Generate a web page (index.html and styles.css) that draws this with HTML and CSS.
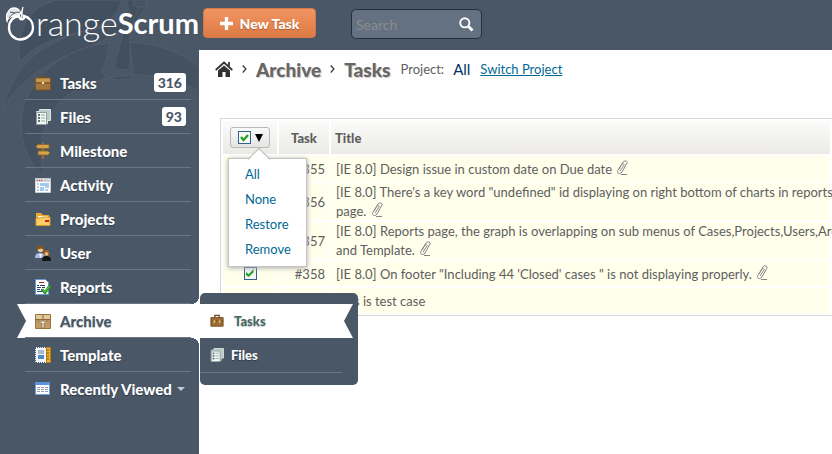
FILE: index.html
```
<!DOCTYPE html>
<html lang="en">
<head>
<meta charset="utf-8">
<title>OrangeScrum - Archive</title>
<link rel="stylesheet" href="styles.css">
</head>
<body>
<div class="app">
  <aside class="sidebar">
    <svg class="watermark" width="199" height="210" viewBox="0 0 199 210" aria-hidden="true">
      <path d="M20 62C14 26 36 0 62 0h60c-3 13-15 25-34 30C58 38 34 44 20 62z" fill="#3f4c5b" stroke="#56616f"/>
      <path d="M3 108C14 62 48 38 92 30c20-4 34-14 42-30h14c-4 16-16 28-30 32C86 55 40 52 3 108z" fill="#424f5e" stroke="#56616f"/>
      <path d="M110 43c-3 12-4 20-8 27 2 8 10 10 18 10 12 0 15-6 12-18l-3-20c27 1 49 9 70 24v26C165 68 96 68 61 101c-18 17-24 46-17 75-26-22-30-62-12-88 18-27 45-42 78-45z" fill="#424f5e" stroke="#56616f"/>
      <path d="M136 0c5 8 0 14-3 20-3 8-4 15-3 22v22c0 8-15 8-15 0 4-14 7-32 14-48 2-6-3-9-1-16z" fill="#3f4c5b" stroke="#56616f"/>
      <ellipse cx="140" cy="3" rx="7" ry="4" fill="#465363" stroke="#5a6573"/>
    </svg>
    <a class="logo" href="#" aria-label="OrangeScrum">
      <svg width="30" height="38" viewBox="0 0 30 38" aria-hidden="true">
        <path d="M13 12C6 13 3 18 3 23.500c0 7 5 12 11.500 12S27 30 27 23.500c0-5-3-10-9-11.500 1 4-4 5-5 0z" fill="none" stroke="#fff" stroke-width="2.400"/>
        <path d="M16 14c-1-5 0-8 1-11M15 9C11 2 5 3 2 8c-2 3-2 6-1 9 1-4 5-5 8-5 3-1 5-1 6-3z" fill="#dfe3e7" stroke="#fff" stroke-width="1.300"/>
        <path d="M3 14c3-4 6-6 11-6M4 8l5 1" fill="none" stroke="#4a5767"/>
      </svg>
      <span class="logo-light">range</span><span class="logo-bold">Scrum</span>
    </a>
    <nav>
      <ul class="nav">
        <li><a href="#"><svg class="icon" viewBox="0 0 16 16"><path d="M5.500 3V1.500h5V3" fill="none" stroke="#6d4a20"/><path d="M.5 3h15v12H.5z" fill="#a5763c" stroke="#7c5425"/><path d="M1 3.500h14V7H1z" fill="#c5974f"/><path d="M0 8h16" stroke="#6d4a20"/><path d="M7 7h2v2H7z" fill="#f3dfaa"/></svg>Tasks<span class="count">316</span></a></li>
        <li><a href="#"><svg class="icon" viewBox="0 0 16 16"><path d="M4.500.5h11v11h-3v3h-11v-12h3z" fill="#bccac8" stroke="#dce7e4"/><path d="M1.500 3.500h10v12h-10z" fill="#f2f8f6" stroke="#8fa19e"/><path d="M3 6h2M3 9h2M3 12h2" stroke="#5c7672" stroke-width="2"/><path d="M6 6h4M6 9h4M6 12h4" stroke="#91a5a1"/></svg>Files<span class="count">93</span></a></li>
        <li><a href="#"><svg class="icon" viewBox="0 0 16 16"><path d="M7 0h2v16H7z" fill="#9a6b2c"/><path d="M1 3l2-1.500h11v4H3L1 4zM3 8h10l2 2-2 2H3z" fill="#d4a44c" stroke="#8b6124" stroke-width=".8"/></svg>Milestone</a></li>
        <li><a href="#"><svg class="icon" viewBox="0 0 16 16"><path d="M.5 1.500h15v14H.5z" fill="#fff" stroke="#c9ced3"/><path d="M1 2h14v3H1z" fill="#cdd1d5"/><path d="M2 3h1v1H2zM4 3h1v1H4zM6 3h1v1H6z" fill="#d33c32"/><path d="M5 6h9v3H5zM5 10h4v4H5z" fill="#9ec9f1"/><path d="M2 7h2M2 10h2M2 13h2M10 10h4M10 13h3" stroke="#759abc"/></svg>Activity</a></li>
        <li><a href="#"><svg class="icon" viewBox="0 0 16 16"><path d="M1 14V2h5l2 2h6v4H2z" fill="#e9aa2d"/><path d="M3 5h10v5H3z" fill="#fff8dc"/><path d="M1 14.500V7h5l2-1h7v8.500z" fill="#f9cf63" stroke="#d79a29"/><path d="M10 9h4v2h-4z" fill="#d61f1f"/></svg>Projects</a></li>
        <li><a href="#"><svg class="icon" viewBox="0 0 16 16"><path d="M0 13c0-4 2-5 5-5s5 1 5 5z" fill="#a9b9e8"/><circle cx="5.500" cy="4.500" r="2.800" fill="#f2c28f"/><path d="M2.500 5C2 1 4 0 6 .5S9 2 8.500 5C7 3 5 3 2.500 5z" fill="#8a5312"/><path d="M4 9l1.500 4L7 9z" fill="#fff"/><path d="M7 16c0-4 1-5 4-5s5 1 5 5z" fill="#141414"/><circle cx="11.500" cy="8.500" r="2.300" fill="#f0bd86"/><path d="M9 12c-1-6 1-7 2.500-7S15 6 14 12c-1-1 0-3-1-4s-3-1-3 0z" fill="#a4631b"/></svg>User</a></li>
        <li><a href="#"><svg class="icon" viewBox="0 0 16 16"><path d="M.5.5h10l3 3v12H.5z" fill="#fff" stroke="#679bd0"/><path d="M4 3.500h5" stroke="#b32424"/><path d="M2 6.500h2m1 0h5M2 8.500h4m1 0h3M2 10.500h3m1 0h2M2 12.500h5" stroke="#28406f"/><path d="M7 10.500l3 3 5-7" fill="none" stroke="#279b27" stroke-width="3"/><path d="M8 10.500l2 2 4-5" fill="none" stroke="#75d45a"/></svg>Reports</a></li>
        <li class="active"><a href="#"><svg class="icon" viewBox="0 0 16 16"><path d="M.5 1.500h15v14H.5z" fill="#c39a62" stroke="#9c7440"/><path d="M1 2h14v4H1z" fill="#e3c898"/><path d="M8 1v5M0 6.500h16" stroke="#8f6a39"/><path d="M3 7c2 3 3 1 5 1s3 2 5-1c0 3-3 3-4 3v5H7v-5c-2 0-4 0-4-3z" fill="#f4f0e6" stroke="#7a5a32" stroke-width=".6"/></svg>Archive</a>
          <ul class="submenu">
            <li class="current"><a href="#"><svg class="icon-small" viewBox="0 0 16 16"><path d="M5.500 4V1.500h5V4" fill="none" stroke="#6d4a20" stroke-width="1.500"/><path d="M1 4h14v10H1z" fill="#9b6c35" stroke="#74501f"/><path d="M1 8h14" stroke="#6d4a20"/><path d="M4 7h2v3H4zM10 7h2v3h-2z" fill="#e6c175"/></svg>Tasks</a></li>
            <li><a href="#"><svg class="icon-small" viewBox="0 0 16 16"><path d="M4.500.5h11v11h-3v3h-11v-12h3z" fill="#bccac8" stroke="#dce7e4"/><path d="M1.500 3.500h10v12h-10z" fill="#f2f8f6" stroke="#8fa19e"/><path d="M3 6h2M3 9h2M3 12h2" stroke="#5c7672" stroke-width="2"/><path d="M6 6h4M6 9h4M6 12h4" stroke="#91a5a1"/></svg>Files</a></li>
          </ul>
        </li>
        <li><a href="#"><svg class="icon" viewBox="0 0 16 16"><path d="M1 1h11v14H1z" fill="#f4f7fb" stroke="#e9eef5" stroke-width="2" stroke-dasharray="1 1"/><path d="M3 4h6M3 6h6" stroke="#667ba0"/><path d="M3 8h6v4H3z" fill="#5588c7"/><path d="M11.500.5h4v15h-4z" fill="#eeb130" stroke="#b97a15"/><path d="M12 3h2M12 6h2M12 9h2M12 12h2" stroke="#8e5b0b"/></svg>Template</a></li>
        <li class="last"><a href="#"><svg class="icon" viewBox="0 0 16 16"><path d="M.5 1.500h14v12H.5z" fill="#fff" stroke="#6f9fdb"/><path d="M0 1h15v3H0z" fill="#5c93dc"/><path d="M2 6.500h3m1 0h3m1 0h3M2 8.500h3m1 0h3m1 0h3M2 10.500h3m1 0h3m1 0h3" stroke="#929cac"/></svg>Recently Viewed<svg class="caret" width="8" height="5" viewBox="0 0 8 5"><path d="M0 0h8L4 4z" fill="#c6cbd0"/></svg></a></li>
      </ul>
    </nav>
  </aside>

  <header class="topbar">
    <button class="new-task" type="button"><svg width="13" height="13" viewBox="0 0 13 13" aria-hidden="true"><path d="M6.500 0v13M0 6.500h13" stroke="#fff" stroke-width="3.400"/></svg>New Task</button>
    <form class="search">
      <input type="search" placeholder="Search" aria-label="Search">
      <button type="submit" aria-label="Submit search"><svg width="15" height="15" viewBox="0 0 15 15"><circle cx="5.800" cy="5.800" r="4.600" fill="none" stroke="#fff" stroke-width="1.900"/><path d="M9.500 9.500l4 4" stroke="#fff" stroke-width="2.800"/></svg></button>
    </form>
  </header>

  <main class="main">
    <div class="crumbs">
      <a href="#" aria-label="Home"><svg width="18" height="17" viewBox="0 0 18 17"><path d="M9 4.500l6 5V16h-4.500v-5h-3v5H3V9.500z" fill="#333"/><path d="M.7 9L9 1.500 17.300 9M14 1v4" fill="none" stroke="#333" stroke-width="1.800"/></svg></a>
      <svg class="sep" width="5" height="8" viewBox="0 0 5 8"><path d="M.7.5L4 4 .7 7.500" fill="none" stroke="#333" stroke-width="1.200"/></svg>
      <h1>Archive</h1>
      <svg class="sep" width="5" height="8" viewBox="0 0 5 8"><path d="M.7.5L4 4 .7 7.500" fill="none" stroke="#333" stroke-width="1.200"/></svg>
      <h1>Tasks</h1>
      <span class="label">Project:</span>
      <span class="project">All</span>
      <a class="switch" href="#">Switch Project</a>
    </div>

    <table class="tasks">
      <thead>
        <tr>
          <th class="col-check">
            <div class="bulk">
              <button class="bulk-button" type="button" aria-label="Select tasks"><span class="box"><svg width="9" height="8" viewBox="0 0 9 8"><path d="M1 3l2.500 3L8 1" fill="none" stroke="#21a121" stroke-width="2.200"/></svg></span><svg width="8" height="8" viewBox="0 0 8 8"><path d="M0 0h8L4 8z" fill="#000"/></svg></button>
              <div class="menu">
                <a href="#">All</a>
                <a href="#">None</a>
                <a href="#">Restore</a>
                <a href="#">Remove</a>
              </div>
            </div>
          </th>
          <th class="col-task">Task</th>
          <th class="col-title">Title</th>
        </tr>
      </thead>
      <tbody>
        <tr><td class="check"><input type="checkbox" checked aria-label="Task 355"></td><td class="id">#355</td><td>[IE 8.0] Design issue in custom date on Due date <svg class="clip" viewBox="0 0 12 16"><path d="M3 10l4-7c1-2 5-1 4 1l-5 9c-2 3-6 1-4-2l4-6c1-1 3 0 2 1l-4 6M5 15.500h6" /></svg></td></tr>
        <tr class="tall"><td class="check"><input type="checkbox" checked aria-label="Task 356"></td><td class="id">#356</td><td>[IE 8.0] There's a key word "undefined" id displaying on right bottom of charts in reports<br>page. <svg class="clip" viewBox="0 0 12 16"><path d="M3 10l4-7c1-2 5-1 4 1l-5 9c-2 3-6 1-4-2l4-6c1-1 3 0 2 1l-4 6M5 15.500h6" /></svg></td></tr>
        <tr class="tall"><td class="check"><input type="checkbox" checked aria-label="Task 357"></td><td class="id">#357</td><td>[IE 8.0] Reports page, the graph is overlapping on sub menus of Cases,Projects,Users,Archive<br>and Template. <svg class="clip" viewBox="0 0 12 16"><path d="M3 10l4-7c1-2 5-1 4 1l-5 9c-2 3-6 1-4-2l4-6c1-1 3 0 2 1l-4 6M5 15.500h6" /></svg></td></tr>
        <tr><td class="check"><input type="checkbox" checked aria-label="Task 358"></td><td class="id">#358</td><td>[IE 8.0] On footer "Including 44 'Closed' cases " is not displaying properly. <svg class="clip" viewBox="0 0 12 16"><path d="M3 10l4-7c1-2 5-1 4 1l-5 9c-2 3-6 1-4-2l4-6c1-1 3 0 2 1l-4 6M5 15.500h6" /></svg></td></tr>
        <tr><td class="check"></td><td class="id"></td><td>This is test case</td></tr>
      </tbody>
    </table>
  </main>
</div>
</body>
</html>
```
FILE: styles.css
```
* { box-sizing: border-box; }

body {
  margin: 0;
  background: #fff;
  color: #5e5e5e;
  font-family: Lato, "Open Sans", sans-serif;
  font-size: 13px;
  overflow: hidden;
}

ul { list-style: none; margin: 0; padding: 0; }
a { color: inherit; text-decoration: none; }
svg { flex: none; }

.app {
  display: grid;
  grid-template-columns: 199px minmax(0, 1fr);
  grid-template-rows: 50px 1fr;
  min-height: 100vh;
}

/* Sidebar */
.sidebar {
  position: relative;
  z-index: 2;
  grid-row: 1 / 3;
  background: #4a5767;
}

.watermark { position: absolute; top: 0; left: 0; opacity: 0.7; }

.logo {
  position: relative;
  display: flex;
  align-items: center;
  height: 46px;
  margin-bottom: 20px;
  padding-left: 6px;
  color: #fff;
  line-height: 40px;
}

.logo-light { font-size: 34px; font-weight: 300; }
.logo-bold { font-family: "Liberation Sans Narrow", Lato, sans-serif; font-size: 29px; font-weight: 700; }

.nav > li { position: relative; padding: 0 8px 0 25px; }

.nav > li > a {
  position: relative;
  display: flex;
  align-items: center;
  gap: 9px;
  height: 34px;
  padding: 0 5px 0 10px;
  border-bottom: 1px solid #6b7685;
  color: #fff;
  font-size: 15px;
  font-weight: 900;
  text-shadow: 0 1px 1px #303a46;
}

.nav > .last > a { gap: 9px; border: 0; }
.caret { margin-left: -4px; }
.icon { width: 16px; height: 16px; }
.icon-small { width: 14px; height: 14px; }

.count {
  margin-left: auto;
  padding: 0 4px;
  border-radius: 3px;
  background: #fff;
  color: #4a5767;
  font-size: 14px;
  line-height: 19px;
  text-shadow: none;
}

.nav > .active {
  margin-left: 17px;
  padding-left: 8px;
  background: #fff;
  clip-path: none;
}

.nav > .active > a { color: #4a5767; text-shadow: 0 1px 1px #b8bdc3; }

/* Ribbon notch on the left edge */
.nav > .active::before {
  content: "";
  position: absolute;
  top: 0;
  left: 0;
  width: 9px;
  height: 100%;
  background: #4a5767;
  clip-path: polygon(0 0, 100% 50%, 0 100%);
}

/* Rounded page edges above and below the ribbon */
.nav > .active::after {
  content: "";
  position: absolute;
  top: -8px;
  bottom: -8px;
  right: 0;
  width: 8px;
  background:
    radial-gradient(circle at 0 0, transparent 8px, #fff 8px) top / 8px 8px no-repeat,
    radial-gradient(circle at 0 100%, transparent 8px, #fff 8px) bottom / 8px 8px no-repeat;
}

.submenu {
  position: absolute;
  z-index: 3;
  top: -11px;
  left: 183px;
  width: 158px;
  padding: 11px 0 12px;
  border-radius: 5px;
  background: #4a5767;
}

.submenu li { margin-right: 16px; border-bottom: 1px solid #6b7685; }

.submenu a {
  display: flex;
  align-items: center;
  gap: 7px;
  height: 34px;
  padding-left: 10px;
  color: #fff;
  font-size: 13px;
  font-weight: 900;
  text-shadow: 0 1px 1px #303a46;
}

.submenu .current {
  margin-right: 5px;
  border: 0;
  background: #fff;
  clip-path: polygon(0 0, 100% 0, 144px 50%, 100% 100%, 0 100%);
}

.submenu .current a { gap: 10px; color: #48695f; text-shadow: 0 1px 1px #c8cdd0; }

/* Top bar */
.topbar {
  display: flex;
  align-items: flex-start;
  gap: 35px;
  padding: 8px 4px;
  background: #4a5767;
}

.new-task {
  display: flex;
  align-items: center;
  justify-content: center;
  gap: 7px;
  width: 113px;
  height: 30px;
  padding: 0;
  border: 1px solid #d67845;
  border-radius: 4px;
  background: linear-gradient(#f19562, #dd7a44);
  color: #fff;
  font: 900 14px "DejaVu Sans", sans-serif;
  font-family: Lato, sans-serif;
  text-shadow: 0 1px 1px #a85a30;
}

.search {
  display: flex;
  align-items: center;
  width: 131px;
  height: 30px;
  margin-top: 1px;
  padding: 0 7px 0 4px;
  border: 1px solid #242f3b;
  border-radius: 5px;
  background: #637183;
}

.search input {
  flex: 1;
  min-width: 0;
  padding: 0;
  border: 0;
  outline: 0;
  background: none;
  color: #fff;
  font: 14px Lato, sans-serif;
}

.search input::placeholder { color: #8b8b8b; }
.search button { display: flex; padding: 0; border: 0; background: none; }

/* Page */
.main { padding: 8px 0 0 16px; background: #fff; }

.crumbs { display: flex; align-items: center; height: 22px; }
.crumbs a { display: flex; }
.sep { margin: 0 9px; }
.crumbs h1 { margin: 0; color: #666; font-size: 19px; font-weight: 900; text-shadow: 1px 1px 1px #ccc; }
.label { margin-left: 10px; }
.project { margin: 0 10px 0 9px; color: #036; font-size: 15px; }
.crumbs .switch { color: #006a95; text-decoration: underline; }

.tasks {
  width: calc(100% - 5px);
  margin: 38px 0 0 5px;
  border: 1px solid #d8d8d8;
  border-right: 0;
  border-collapse: separate;
  border-spacing: 2px;
  table-layout: fixed;
}

.tasks th {
  height: 33px;
  padding: 0 4px;
  background: linear-gradient(#fbfbfa, #ebeae6);
  font-size: 13px;
  font-weight: 900;
  text-align: left;
}

.tasks .col-check { width: 54px; padding: 0 7px; }
.tasks .col-task { width: 50px; text-align: center; }

.tasks td {
  height: 25px;
  padding: 0 5px;
  background: #ffffec;
  line-height: 18px;
  white-space: nowrap;
}

.tasks .tall td { height: 37px; }
.tasks .id { padding-right: 4px; text-align: right; }
.tasks .check { padding: 0; text-align: center; }

.check input {
  appearance: none;
  display: block;
  width: 13px;
  height: 13px;
  margin: 0 auto;
  border: 1px solid #33608c;
  background: #f4f4f2;
}

.check input::after {
  content: "";
  display: block;
  width: 9px;
  height: 8px;
  margin: 1px;
  background: #21a121;
  clip-path: polygon(0 35%, 35% 65%, 90% 0, 90% 40%, 35% 100%, 0 70%);
}

.clip { width: 12px; height: 16px; margin-left: 1px; vertical-align: -1px; fill: none; stroke: #858585; }

.bulk { position: relative; }

.bulk-button {
  display: flex;
  align-items: center;
  justify-content: center;
  gap: 4px;
  width: 40px;
  height: 21px;
  padding: 0;
  border: 1px solid #b8b8b8;
  border-radius: 3px;
  background: linear-gradient(#fafafa, #e4e4e4);
}

.box {
  display: flex;
  align-items: center;
  justify-content: center;
  width: 13px;
  height: 13px;
  border: 1px solid #33608c;
  background: #f8f8f6;
}

.menu {
  position: absolute;
  z-index: 1;
  top: 31px;
  left: -2px;
  width: 79px;
  padding: 3px 0 4px;
  border: 1px solid #c3c3c3;
  background: #fff;
  box-shadow: 0 1px 5px #aaa;
}

.menu::before {
  content: "";
  position: absolute;
  top: -8px;
  left: 22px;
  width: 15px;
  height: 15px;
  border: 1px solid #bbb;
  border-right: 0;
  border-bottom: 0;
  background: linear-gradient(135deg, #fff 50%, transparent 50%);
  transform: rotate(45deg);
}

.menu a {
  display: block;
  padding-left: 16px;
  color: #006a95;
  font-weight: 400;
  line-height: 25px;
}
```
